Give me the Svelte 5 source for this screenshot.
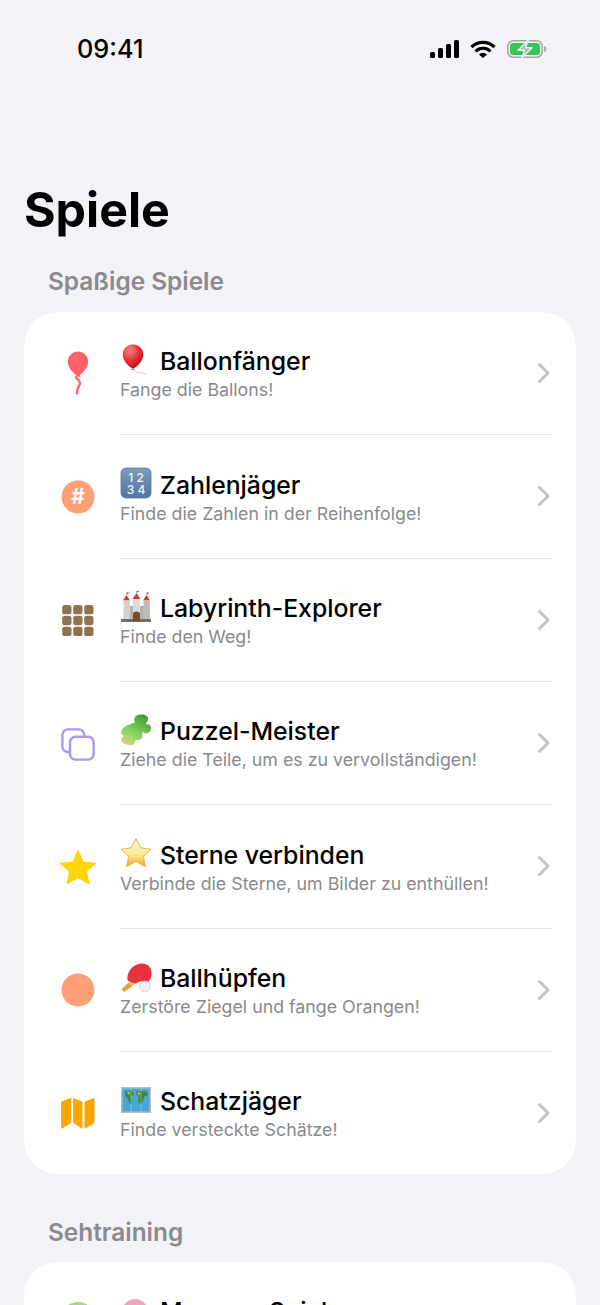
<script>
  const rows = [
    { k: 'balloon', e: 'balloon', t: 'Ballonfänger', s: 'Fange die Ballons!' },
    { k: 'hash', e: 'keys', t: 'Zahlenjäger', s: 'Finde die Zahlen in der Reihenfolge!' },
    { k: 'grid', e: 'castle', t: 'Labyrinth-Explorer', s: 'Finde den Weg!' },
    { k: 'copy', e: 'puzzle', t: 'Puzzel-Meister', s: 'Ziehe die Teile, um es zu vervollständigen!' },
    { k: 'star', e: 'star', t: 'Sterne verbinden', s: 'Verbinde die Sterne, um Bilder zu enthüllen!' },
    { k: 'circle', e: 'pong', t: 'Ballhüpfen', s: 'Zerstöre Ziegel und fange Orangen!' },
    { k: 'map', e: 'world', t: 'Schatzjäger', s: 'Finde versteckte Schätze!' }
  ];
</script>

{#snippet icon(k)}
  <svg class="ic" viewBox="0 0 40 50" width="40" height="50">
    {#if k === 'balloon'}
      <path d="M20 2.500c5.600 0 10.200 4.600 10.200 10.200 0 5.800-5 11-8.400 13.300l.8 1.700h-5.200l.8-1.700C14.800 23.700 9.800 18.500 9.800 12.700 9.800 7.100 14.400 2.500 20 2.500z" fill="#fd6269"/>
      <path d="M18 28c.5 2.500 4.500 3.500 4 6.500s-3 4-3.200 10" fill="none" stroke="#fd6269" stroke-width="2.300" stroke-linecap="round"/>
    {:else if k === 'hash'}
      <circle cx="20" cy="25" r="16.500" fill="#ff9f78"/>
      <text x="20" y="32" text-anchor="middle" class="hash">#</text>
    {:else if k === 'grid'}
      {#each [0, 1, 2] as r}
        {#each [0, 1, 2] as c}
          <rect x={4.200 + c * 11} y={10 + r * 10.850} width="9.300" height="9.300" rx="2.600" fill="#8f7350"/>
        {/each}
      {/each}
    {:else if k === 'copy'}
      <rect x="4.400" y="10.400" width="21.900" height="22.600" rx="5.500" fill="none" stroke="#ad95f4" stroke-width="2.400"/>
      <rect x="12" y="17.700" width="23.600" height="22.900" rx="5.500" fill="#fff" stroke="#ad95f4" stroke-width="2.400"/>
    {:else if k === 'star'}
      <path d="M20 9l5 11.200 12.500 1.200-9.400 8.100 2.700 12L20 35.300 9.200 41.500l2.700-12-9.400-8.100L15 20.200z" fill="#ffd60a" stroke="#ffd60a" stroke-width="1.500" stroke-linejoin="round"/>
    {:else if k === 'circle'}
      <circle cx="20" cy="25" r="16.500" fill="#ff9f78"/>
    {:else if k === 'map'}
      <path d="M3.700 14L12.700 10.500V34.700L3.700 40.200zM15.700 10.500L24 14V40.200L15.700 34.700zM27 14L36 10.500V34.700L27 40.200z" fill="#ffa500" stroke="#ffa500" stroke-width="1" stroke-linejoin="round"/>
    {:else if k === 'leaf'}
      <circle cx="20" cy="21" r="17" fill="#a3d977"/>
    {/if}
  </svg>
{/snippet}

{#snippet emoji(e)}
  <svg class="em" viewBox="0 0 32 32" width="32" height="32">
    {#if e === 'balloon'}
      <defs>
        <radialGradient id="bal" cx="0.35" cy="0.25" r="0.8"><stop offset="0" stop-color="#ff8080"/><stop offset="0.6" stop-color="#e52a35"/><stop offset="1" stop-color="#a8131d"/></radialGradient>
      </defs>
      <path d="M13 0.500c6 0 10.300 4.500 10.300 10 0 6-5 11-9 13.500h-2.600C7.700 21.500 2.700 16.500 2.700 10.500 2.700 5 7 0.500 13 0.500z" fill="url(#bal)"/>
      <path d="M13 24l-1.800 1.800h3.600z" fill="#b91c26"/>
      <path d="M13 25.500c1 2.500 6 2.500 13 5" fill="none" stroke="#b9b9b9" stroke-width="0.700"/>
    {:else if e === 'keys'}
      <defs>
        <linearGradient id="key" x1="0" y1="0" x2="0" y2="1"><stop offset="0" stop-color="#7e9cbb"/><stop offset="1" stop-color="#4d75a1"/></linearGradient>
      </defs>
      <rect x="1" y="1" width="30" height="30" rx="5" fill="url(#key)" stroke="#5c7898" stroke-width="0.800"/>
      <text x="16" y="14.500" text-anchor="middle" class="keyt">1 2</text>
      <text x="16" y="27" text-anchor="middle" class="keyt">3 4</text>
    {:else if e === 'castle'}
      <path d="M3 9.500L6.500 4 10 9.500zM12.500 8L16.500 2l4 6zM23 9.500L26.500 4 30 9.500z" fill="#d8333a"/>
      <path d="M6.500 4V1.500h3zM16.500 2V0h3zM26.500 4V1.500h3z" fill="#d8333a"/>
      <rect x="8" y="15" width="18" height="15" fill="#b4b2aa"/>
      <rect x="3.500" y="9.500" width="6.500" height="20.500" fill="#d4d2cb"/>
      <rect x="13" y="8" width="7" height="13" fill="#dedcd6"/>
      <rect x="23.500" y="9.500" width="6.500" height="20.500" fill="#bdbbb4"/>
      <rect x="1" y="28" width="30" height="3" fill="#6e6c66"/>
      <path d="M13 30v-6a3.500 3.500 0 0 1 7 0v6z" fill="#7a4a24"/>
    {:else if e === 'puzzle'}
      <defs>
        <linearGradient id="puz" x1="0.8" y1="0" x2="0.15" y2="1"><stop offset="0" stop-color="#3f9a32"/><stop offset="0.65" stop-color="#8ed765"/><stop offset="1" stop-color="#e2d36e"/></linearGradient>
      </defs>
      <path d="M1 18C2 14 5 12 8 11L15 8.500C13 5 15 1 20 0.500C25 0 29 2 28 6C27.500 8 25.500 8.500 26 10.500C29 9.500 32 12 31 15.500C30 19 26 20.500 23.500 18.500L22.500 17.500L22 24C20 27 16 25 15 27C14 29 14.500 31 11 31C7 31.500 3 30 1.500 27C0.500 25 2 23 4 22C2.500 21 0.800 20 1 18z" fill="url(#puz)"/>
    {:else if e === 'star'}
      <defs>
        <linearGradient id="st" x1="0" y1="0" x2="0" y2="1"><stop offset="0" stop-color="#fffbe6"/><stop offset="0.55" stop-color="#ffeb9c"/><stop offset="1" stop-color="#f7a928"/></linearGradient>
      </defs>
      <path d="M16 1.500l4.700 9.300 10.300 1.400-7.600 7 1.900 10.300L16 24.500l-9.300 5 1.900-10.300-7.600-7 10.300-1.400z" fill="url(#st)" stroke="#e9a63a" stroke-width="0.900" stroke-linejoin="round"/>
    {:else if e === 'pong'}
      <path d="M9 21.500L1.500 28l2.500 3 8.500-6z" fill="#e8a13a"/>
      <path d="M7.500 19c-1-7 4-14 11-16 7-2 13 2 13 9s-3 9-6 10l-3-2c-3 0-8 4-11 3z" fill="#e8333a"/>
      <path d="M8 20l4.500 4.500 3-2z" fill="#e0b070"/>
      <circle cx="25" cy="25.500" r="5.500" fill="#efefef" stroke="#bbb" stroke-width="0.500"/>
    {:else if e === 'world'}
      <rect x="1" y="3" width="30" height="26" fill="#bfc0b8"/>
      <rect x="2.500" y="4.500" width="27" height="23" fill="#4aa6d6"/>
      <path d="M5 7h7l2 3-3 3 1 5-2 3-2-6-3-3zM16 7h10l2 4-4 2-1 4-3 4-2-5 1-3-3-3z" fill="#3f8a3a"/>
      <path d="M17 8l3 1-1 3zM7 8h3l-1 3z" fill="#d8c560"/>
      <path d="M11 3v26M21 3v26" stroke="#fff" stroke-opacity="0.350" stroke-width="0.900"/>
    {:else if e === 'brain'}
      <ellipse cx="15" cy="18" rx="13" ry="13" fill="#f0a5bd"/>
    {/if}
  </svg>
{/snippet}

{#snippet row(r, last)}
  <div class="row" class:end={last}>
    <div class="iconcol">{@render icon(r.k)}</div>
    <div class="main" class:last>
      <div class="txt">
        <div class="title">{@render emoji(r.e)}<span>{r.t}</span></div>
        <div class="sub">{r.s}</div>
      </div>
      <svg class="chev" viewBox="0 0 14 22" width="14" height="22"><path d="M2.500 2.500L11 11l-8.500 8.500" fill="none" stroke="#c4c4c7" stroke-width="3" stroke-linecap="round" stroke-linejoin="round"/></svg>
    </div>
  </div>
{/snippet}

<div class="page">
  <header class="status">
    <span class="time">09:41</span>
    <div class="indicators">
      <svg viewBox="0 0 29 18" width="29" height="18"><rect x="0" y="12" width="5" height="6" rx="1.500"/><rect x="8" y="8" width="5" height="10" rx="1.500"/><rect x="16" y="4" width="5" height="14" rx="1.500"/><rect x="24" y="0" width="5" height="18" rx="1.500"/></svg>
      <svg viewBox="0 0 26 18" width="26" height="18"><path d="M1.500 7a16.500 16.500 0 0 1 23 0M5.500 11.300a10.800 10.800 0 0 1 15 0" fill="none" stroke="#000" stroke-width="3.200" stroke-linecap="butt"/><path d="M9 14.400a5.500 5.500 0 0 1 8 0L13 18z"/></svg>
      <svg viewBox="0 0 40 18" width="40" height="18">
        <rect x="0.800" y="0.800" width="34.400" height="16.400" rx="5.500" fill="none" stroke="#a8a9ab" stroke-width="1.600"/>
        <rect x="3" y="3" width="30" height="12" rx="3.200" fill="#34c759"/>
        <path d="M37 6c1.600.4 2.500 1.600 2.500 3s-.9 2.600-2.500 3z" fill="#a8a9ab"/>
        <path d="M21 0.500L11 10.200h6.500L15 17.500 25 7.800h-6.500z" fill="#b5b6b8" stroke="#f2f2f7" stroke-width="1.400" stroke-linejoin="round"/>
      </svg>
    </div>
  </header>

  <h1>Spiele</h1>

  <h2>Spaßige Spiele</h2>
  <section class="card">
    {#each rows as r, i}
      {@render row(r, i === rows.length - 1)}
    {/each}
  </section>

  <h2 class="second">Sehtraining</h2>
  <section class="card next">
    {@render row({ k: 'leaf', e: 'brain', t: 'Memory-Spiel', s: 'Finde die Paare!' }, true)}
  </section>
</div>

<style>
  :global(body) { margin: 0; background: #f2f2f7; }
  .page {
    width: 600px;
    height: 1305px;
    overflow: hidden;
    background: #f2f2f7;
    font-family: Inter, "Liberation Sans", sans-serif;
    color: #000;
  }
  .status {
    display: flex;
    justify-content: space-between;
    align-items: center;
    height: 24px;
    padding: 37px 53px 0 77px;
  }
  .time { font-size: 25.300px; font-weight: 500; line-height: 24px; }
  .indicators { display: flex; align-items: center; gap: 11px; }
  h1 {
    margin: 119px 0 0 24px;
    font-size: 48.300px;
    line-height: 60px;
    font-weight: 700;
  }
  h2 {
    margin: 25px 0 0 48px;
    font-size: 24.400px;
    line-height: 32px;
    font-weight: 600;
    color: #8a8a8f;
  }
  h2.second { margin-top: 42px; }
  .card {
    margin: 15px 24px 0;
    background: #fff;
    border-radius: 34px;
  }
  .card.next { margin-top: 14px; }
  .row { display: flex; height: 123.330px; }
  .row.end { height: 122px; }
  .iconcol { width: 96px; display: flex; justify-content: center; align-items: center; padding-left: 11px; box-sizing: border-box; }
  .ic { display: block; }
  .main {
    flex: 1;
    margin-right: 24px;
    display: flex;
    align-items: center;
    border-bottom: 1.500px solid #e4e4e6;
  }
  .main.last { border-bottom: none; }
  .txt { flex: 1; padding-top: 1.500px; }
  .title {
    display: flex;
    align-items: center;
    gap: 8px;
    font-size: 24.800px;
    line-height: 32px;
    font-weight: 550;
  }
  .em { display: block; flex: none; margin-top: -3px; }
  .sub {
    font-size: 17.800px;
    line-height: 24px;
    color: #8a8a8e;
    margin-top: 1px;
  }
  .chev { display: block; flex: none; margin-right: 1px; }
  .hash { font: 700 21px Inter, sans-serif; fill: #fff; }
  .keyt { font: 500 12px Inter, sans-serif; fill: #eef3f8; }
</style>
